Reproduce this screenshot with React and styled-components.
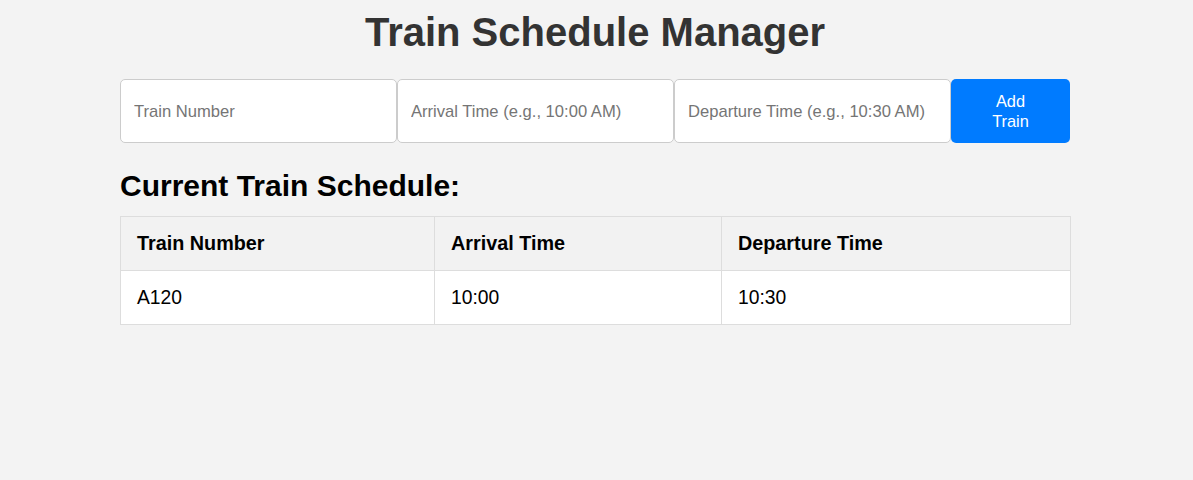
import React, { useState } from "react";
import styled, { createGlobalStyle } from "styled-components";

const GlobalStyle = createGlobalStyle`
  html, body {
    margin: 0;
    padding: 0;
    background-color: #f3f3f3;
    font-family: "Liberation Sans", Arial, sans-serif;
  }
`;

const Shell = styled.div`
  padding-right: 3px;
`;

const Page = styled.div`
  width: 950px;
  margin: 0 auto;
  padding-top: 9px;
`;

const Title = styled.h1`
  margin: 0 0 24px;
  text-align: center;
  font-size: 40px;
  line-height: 46px;
  font-weight: bold;
  color: #333;
`;

const Form = styled.form`
  display: flex;
  height: 64px;
`;

const Input = styled.input`
  box-sizing: border-box;
  width: 277px;
  height: 64px;
  margin: 0;
  padding: 1px 13px 0;
  border: 1px solid #ccc;
  border-radius: 5px;
  background: #fff;
  font-family: "Liberation Sans", Arial, sans-serif;
  font-size: 16.6px;
  color: #333;
  outline: none;
  &::placeholder {
    color: #757575;
  }
`;

const AddButton = styled.button`
  box-sizing: border-box;
  width: 119px;
  height: 64px;
  padding: 0 30px;
  border: none;
  border-radius: 5px;
  background-color: #007bff;
  color: #fff;
  font-family: "Liberation Sans", Arial, sans-serif;
  font-size: 16.4px;
  line-height: 20px;
  cursor: pointer;
`;

const Subtitle = styled.h2`
  margin: 26px 0 13px;
  font-size: 30px;
  line-height: 34px;
  font-weight: bold;
  color: #000;
`;

const Table = styled.table`
  width: 950px;
  border-collapse: collapse;
  table-layout: fixed;
  background: #fff;
`;

const HeadCell = styled.th`
  box-sizing: border-box;
  width: ${(p) => p.$w}px;
  padding: 16px;
  border: 1px solid #ddd;
  background-color: #f2f2f2;
  text-align: left;
  font-size: 19.8px;
  line-height: 21px;
  font-weight: bold;
  color: #000;
`;

const Cell = styled.td`
  padding: 16px;
  border: 1px solid #ddd;
  font-size: 19.3px;
  line-height: 21px;
  color: #000;
`;

const columns = [
  { label: "Train Number", w: 314 },
  { label: "Arrival Time", w: 287 },
  { label: "Departure Time", w: 349 },
];

export default function App() {
  const [trains] = useState([{ number: "A120", arrival: "10:00", departure: "10:30" }]);

  return (
    <>
      <GlobalStyle />
      <Shell>
        <Page>
          <Title>Train Schedule Manager</Title>
          <Form onSubmit={(e) => e.preventDefault()}>
            <Input placeholder="Train Number" />
            <Input placeholder="Arrival Time (e.g., 10:00 AM)" />
            <Input placeholder="Departure Time (e.g., 10:30 AM)" />
            <AddButton type="submit">Add Train</AddButton>
          </Form>
          <Subtitle>Current Train Schedule:</Subtitle>
          <Table>
            <thead>
              <tr>
                {columns.map((c) => (
                  <HeadCell key={c.label} $w={c.w}>{c.label}</HeadCell>
                ))}
              </tr>
            </thead>
            <tbody>
              {trains.map((t) => (
                <tr key={t.number}>
                  <Cell>{t.number}</Cell>
                  <Cell>{t.arrival}</Cell>
                  <Cell>{t.departure}</Cell>
                </tr>
              ))}
            </tbody>
          </Table>
        </Page>
      </Shell>
    </>
  );
}
